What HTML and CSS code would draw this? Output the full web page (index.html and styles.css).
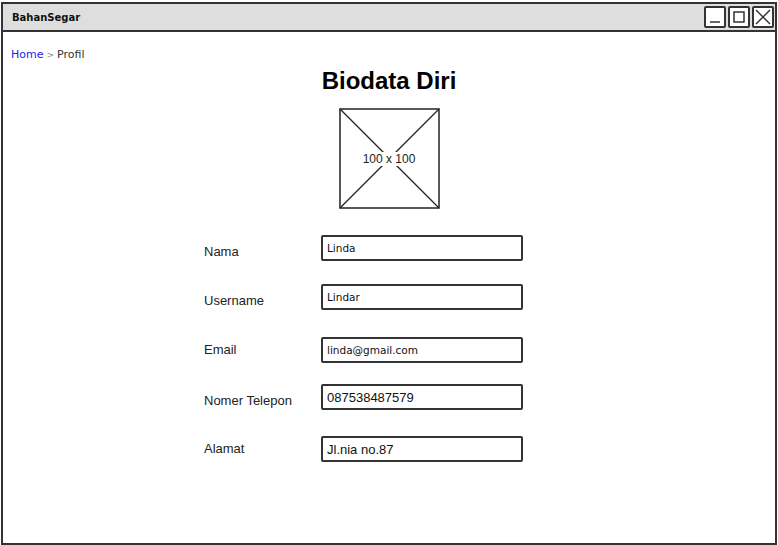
FILE: index.html
```html
<!DOCTYPE html>
<html>
<head>
<meta charset="utf-8">
<link rel="stylesheet" href="styles.css">
</head>
<body>
<div class="window">
  <div class="titlebar">
    <span class="app-name">BahanSegar</span>
    <div class="controls">
      <span class="ctl"><svg width="16" height="16" viewBox="0 0 16 16"><line x1="3" y1="13" x2="13" y2="13" stroke="#333" stroke-width="1.5"/></svg></span>
      <span class="ctl"><svg width="16" height="16" viewBox="0 0 16 16"><rect x="3" y="3" width="10" height="10" fill="none" stroke="#333" stroke-width="1.5"/></svg></span>
      <span class="ctl"><svg width="16" height="16" viewBox="0 0 16 16"><line x1="1" y1="1" x2="15" y2="15" stroke="#333" stroke-width="1.4"/><line x1="15" y1="1" x2="1" y2="15" stroke="#333" stroke-width="1.4"/></svg></span>
    </div>
  </div>
  <div class="content">
    <div class="breadcrumb"><span class="crumb-link">Home</span><span class="sep">&gt;</span><span class="crumb">Profil</span></div>
    <h1 class="title">Biodata Diri</h1>
    <div class="avatar">
      <svg class="avatar-x" width="101" height="101" viewBox="0 0 101 101">
        <rect x="1" y="1" width="99" height="99" fill="#fff" stroke="#222" stroke-width="1.5"/>
        <line x1="1" y1="1" x2="100" y2="100" stroke="#222" stroke-width="1.2"/>
        <line x1="100" y1="1" x2="1" y2="100" stroke="#222" stroke-width="1.2"/>
      </svg>
      <span class="avatar-label">100 x 100</span>
    </div>
    <div class="form">
      <div class="row r1"><span class="label">Nama</span><div class="field">Linda</div></div>
      <div class="row r2"><span class="label">Username</span><div class="field">Lindar</div></div>
      <div class="row r3"><span class="label">Email</span><div class="field">linda@gmail.com</div></div>
      <div class="row r4"><span class="label">Nomer Telepon</span><div class="field">087538487579</div></div>
      <div class="row r5"><span class="label">Alamat</span><div class="field">Jl.nia no.87</div></div>
    </div>
  </div>
</div>
</body>
</html>
```
FILE: styles.css
```css
html, body {
  margin: 0;
  padding: 0;
  background: #fff;
}
body {
  font-family: "Liberation Sans", Arial, sans-serif;
  color: #222;
}
.window {
  margin: 2px 0 0 1px;
  width: 776px;
  height: 543px;
  box-sizing: border-box;
  border: 2px solid #333;
  display: flex;
  flex-direction: column;
}
.titlebar {
  height: 26px;
  flex: none;
  background: #dedede;
  border-bottom: 2px solid #333;
  display: flex;
  align-items: center;
  justify-content: space-between;
  padding-left: 9px;
}
.app-name {
  font-family: "DejaVu Sans", sans-serif;
  font-weight: bold;
  font-size: 10px;
  color: #111;
}
.controls {
  display: flex;
  gap: 2px;
  margin-right: 1px;
}
.ctl {
  width: 18px;
  height: 18px;
  border: 2px solid #333;
  border-radius: 2px;
  background: #fff;
  display: flex;
  align-items: center;
  justify-content: center;
}
.content {
  flex: 1;
  display: flex;
  flex-direction: column;
}
.breadcrumb {
  margin: 15px 0 0 8px;
  font-family: "DejaVu Sans", sans-serif;
  font-size: 11px;
  line-height: 16px;
  color: #333;
  display: flex;
  gap: 3px;
}
.crumb-link { color: #2222ee; }
.sep { color: #888; font-size: 9px; }
.title {
  margin: 3px 0 0 0;
  text-align: center;
  font-size: 24px;
  line-height: 30px;
  font-weight: bold;
  color: #000;
}
.avatar {
  position: relative;
  width: 101px;
  height: 101px;
  margin: 12px auto 0;
}
.avatar-x { display: block; }
.avatar-label {
  position: absolute;
  left: 50%;
  top: 50%;
  transform: translate(-50%, -50%);
  background: #fff;
  padding: 0 1px;
  font-size: 12px;
  color: #222;
  white-space: nowrap;
}
.form {
  margin: 26px 0 0 201px;
  display: flex;
  flex-direction: column;
}
.row {
  display: grid;
  grid-template-columns: 117px 202px;
  align-items: center;
}
.r2 { margin-top: 23px; }
.r3 { margin-top: 27px; }
.r4 { margin-top: 21px; }
.r5 { margin-top: 26px; }
.label {
  font-size: 13px;
  color: #222;
}
.r1 .label { margin-top: 6px; }
.r2 .label { margin-top: 7px; }
.r3 .label { margin-top: -1px; }
.r4 .label { margin-top: 7px; }
.r5 .label { margin-top: -1px; }
.field {
  height: 26px;
  box-sizing: border-box;
  border: 2px solid #333;
  border-radius: 2px;
  padding: 0 4px;
  display: flex;
  align-items: center;
  font-family: "DejaVu Sans", sans-serif;
  font-size: 10.5px;
  color: #111;
}
.r4 .field { font-family: "Liberation Sans", Arial, sans-serif; font-size: 13px; }
.r5 .field { font-family: "Liberation Sans", Arial, sans-serif; font-size: 13px; }
```
